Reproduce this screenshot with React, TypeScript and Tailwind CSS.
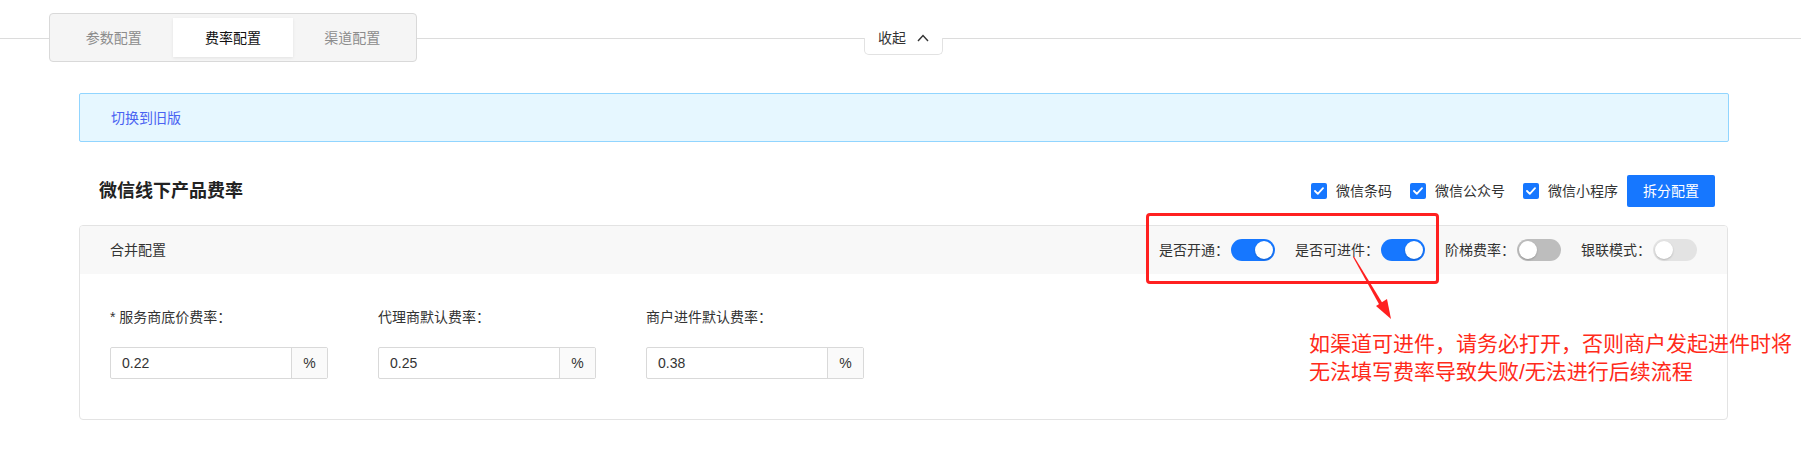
import { useState } from "react";

type Field = { label: string; value: string };

const fields: Field[] = [
  { label: "* 服务商底价费率：", value: "0.22" },
  { label: "代理商默认费率：", value: "0.25" },
  { label: "商户进件默认费率：", value: "0.38" },
];

const channels = ["微信条码", "微信公众号", "微信小程序"];

function Toggle({ on, disabled }: { on: boolean; disabled?: boolean }) {
  const track = on ? "bg-[#1677ff] justify-end" : disabled ? "bg-[#e3e3e3] justify-start" : "bg-[#bdbdbd] justify-start";
  return (
    <span className={"ml-[2px] flex h-[22px] w-[44px] items-center rounded-full p-[2px] " + track}>
      <span className="h-[18px] w-[18px] rounded-full bg-white shadow-[0_1px_2px_rgba(0,0,0,0.2)]" />
    </span>
  );
}

function Checkbox({ label }: { label: string }) {
  return (
    <label className="mr-[18px] flex items-center gap-[9px]">
      <span className="flex h-4 w-4 items-center justify-center rounded-[2px] bg-[#1677ff]">
        <svg width="10" height="8" viewBox="0 0 10 8" fill="none">
          <path d="M1 4l2.8 2.8L9 1.2" stroke="white" strokeWidth="1.8" strokeLinecap="round" strokeLinejoin="round" />
        </svg>
      </span>
      <span>{label}</span>
    </label>
  );
}

export default function App() {
  const [tab, setTab] = useState(1);
  const tabs = ["参数配置", "费率配置", "渠道配置"];

  return (
    <div className="relative h-[459px] w-[1801px] overflow-hidden bg-white font-['Liberation_Sans','Noto_Sans_CJK_SC',sans-serif] text-[14px] text-[#333]">
      {/* top tabs + collapse button along the divider */}
      <div className="flex h-[93px] items-start">
        <div className="mt-[38px] h-px w-[49px] bg-[#dcdcdc]" />
        <div className="mt-[13px] flex h-[49px] w-[368px] rounded-[4px] border border-[#d9d9d9] bg-[#f5f5f5] p-[4px]">
          {tabs.map((t, i) => (
            <button
              key={t}
              onClick={() => setTab(i)}
              className={
                "flex flex-1 items-center justify-center leading-[22px] " +
                (tab === i ? "bg-white text-[#111] shadow-[0_1px_3px_rgba(0,0,0,0.08)]" : "text-[#8c8c8c]")
              }
            >
              {t}
            </button>
          ))}
        </div>
        <div className="mt-[38px] h-px w-[447px] bg-[#dcdcdc]" />
        <button className="relative mt-[21px] flex h-[34px] w-[79px] items-start justify-center gap-[11px] pt-[6px] leading-[22px] text-[#333]">
          <span className="absolute inset-x-0 bottom-0 top-[17px] rounded-b-[5px] border border-t-0 border-[#e2e2e2]" />
          <span className="relative">收起</span>
          <svg className="relative mt-[7px]" width="12" height="8" viewBox="0 0 12 8" fill="none">
            <path d="M1 7l5-5.5L11 7" stroke="#333" strokeWidth="1.4" />
          </svg>
        </button>
        <div className="mt-[38px] h-px flex-1 bg-[#dcdcdc]" />
      </div>

      <div className="ml-[79px] w-[1650px]">
        <div className="flex h-[49px] items-center rounded-[2px] border border-[#91d5ff] bg-[#e6f7ff] pl-[31px]">
          <span className="cursor-pointer leading-[22px] text-[#4a63f2]">切换到旧版</span>
        </div>

        <div className="mt-[33px] flex h-[32px] items-center justify-between pl-[20px] pr-[14px]">
          <h2 className="text-[18px] font-bold leading-[26px] text-[#222]">微信线下产品费率</h2>
          <div className="flex items-center">
            {channels.map((c) => (
              <Checkbox key={c} label={c} />
            ))}
            <button className="-ml-[9px] h-[32px] w-[88px] rounded-[2px] bg-[#1677ff] text-white">拆分配置</button>
          </div>
        </div>

        <div className="mt-[18px] w-[1649px] overflow-hidden rounded-[4px] border border-[#e3e3e3]">
          <div className="flex h-[48px] items-center justify-between bg-[#f8f8f8] px-[30px]">
            <span className="leading-[22px]">合并配置</span>
            <div className="flex items-center gap-[20px]">
              <div className="flex items-center">
                <span>是否开通：</span>
                <Toggle on />
              </div>
              <div className="flex items-center">
                <span>是否可进件：</span>
                <Toggle on />
              </div>
              <div className="flex items-center">
                <span>阶梯费率：</span>
                <Toggle on={false} />
              </div>
              <div className="flex items-center">
                <span>银联模式：</span>
                <Toggle on={false} disabled />
              </div>
            </div>
          </div>
          <div className="flex gap-[50px] pb-[40px] pl-[30px] pt-[32px]">
            {fields.map((f) => (
              <div key={f.label} className="flex w-[218px] flex-col">
                <span className="mb-[19px] leading-[22px]">{f.label}</span>
                <div className="flex h-[32px] rounded-[2px] border border-[#d9d9d9]">
                  <span className="flex flex-1 items-center pl-[11px]">{f.value}</span>
                  <span className="flex w-[36px] items-center justify-center border-l border-[#d9d9d9] bg-[#fafafa]">%</span>
                </div>
              </div>
            ))}
          </div>
        </div>
      </div>

      {/* annotation: red frame, arrow and note */}
      <div className="absolute left-[1146px] top-[213px] h-[71px] w-[293px] rounded-[4px] border-[3px] border-[#ff2020]" />
      <svg className="absolute left-[1340px] top-[250px]" width="60" height="75" viewBox="0 0 60 75">
        <polygon points="13,7 14,6.5 43,54 40,56" fill="#ff2020" />
        <polygon points="51,69 36,56 47,49" fill="#ff2020" />
      </svg>
      <div className="absolute left-[1309px] top-[330px] whitespace-nowrap text-[21px] leading-[28px] text-[#ff2a1a]">
        如渠道可进件，请务必打开，否则商户发起进件时将
        <br />
        无法填写费率导致失败/无法进行后续流程
      </div>
    </div>
  );
}
